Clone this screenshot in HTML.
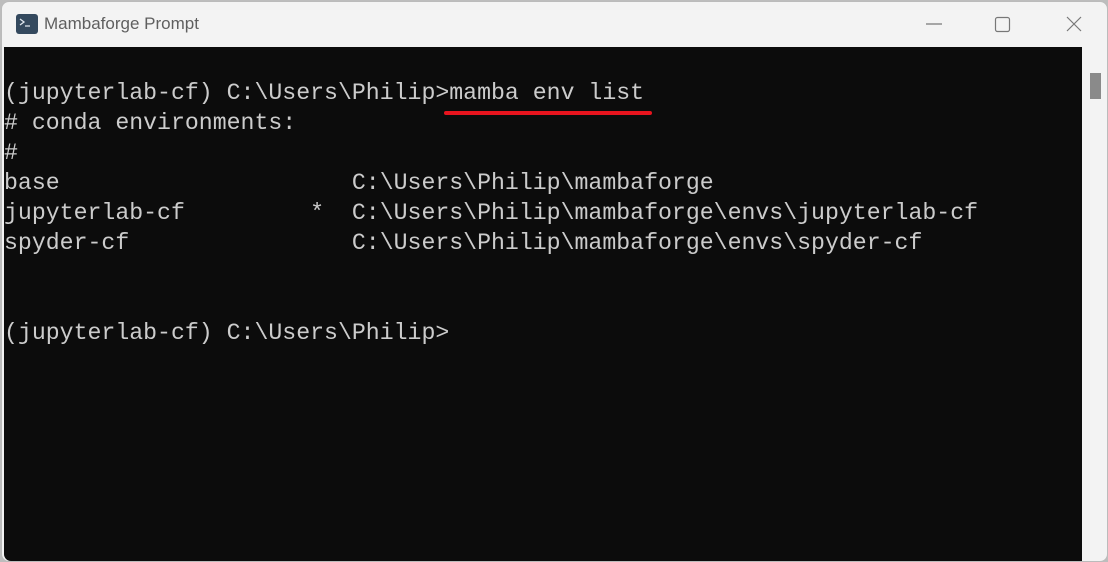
<!DOCTYPE html>
<html><head><style>
html,body{margin:0;padding:0;width:1108px;height:562px;overflow:hidden;background:#bdbdbd;}
.win{position:absolute;left:1px;top:1px;width:1105px;height:559px;background:#f3f3f3;border:1px solid #bbb;border-radius:8px;overflow:hidden;}
.title{position:absolute;left:42px;top:12px;font:17px "Liberation Sans",sans-serif;color:#5f5f5f;}
.icon{position:absolute;left:14px;top:12px;width:22px;height:20px;background:#34495e;border-radius:3px;}
.term{position:absolute;left:2px;top:45px;width:1078px;height:514px;background:#0c0c0c;border-bottom-left-radius:7px;}
pre{margin:0;position:absolute;left:0px;top:1px;font:23.2px/30px "Liberation Mono",monospace;color:#cccccc;}
.ul{position:absolute;left:440px;top:64px;width:208px;height:4px;background:#e8141e;border-radius:2px;}
.thumb{position:absolute;left:1088px;top:71px;width:11px;height:26px;background:#8a8a8a;}
.ctl{position:absolute;color:#666;}
</style></head><body>
<div class="win">
<div class="icon"><svg width="22" height="20"><path d="M4 5l4 3-4 3" stroke="#dfe6ee" stroke-width="1.3" fill="none"/><path d="M9 12h5" stroke="#dfe6ee" stroke-width="1.3"/></svg></div>
<div class="title">Mambaforge Prompt</div>
<svg class="ctl" style="left:915px;top:12px" width="190" height="20">
<path d="M9 10h16" stroke="#777" stroke-width="1.2"/>
<rect x="78.5" y="3.5" width="14" height="14" rx="2" stroke="#777" stroke-width="1.2" fill="none"/>
<path d="M150 3l14 14M164 3l-14 14" stroke="#777" stroke-width="1.2"/>
</svg>
<div class="term">
<pre>

(jupyterlab-cf) C:\Users\Philip&gt;mamba env list
# conda environments:
#
base                     C:\Users\Philip\mambaforge
jupyterlab-cf         *  C:\Users\Philip\mambaforge\envs\jupyterlab-cf
spyder-cf                C:\Users\Philip\mambaforge\envs\spyder-cf


(jupyterlab-cf) C:\Users\Philip&gt;</pre>
<div class="ul"></div>
</div>
<div class="thumb"></div>
</div>
</body></html>
